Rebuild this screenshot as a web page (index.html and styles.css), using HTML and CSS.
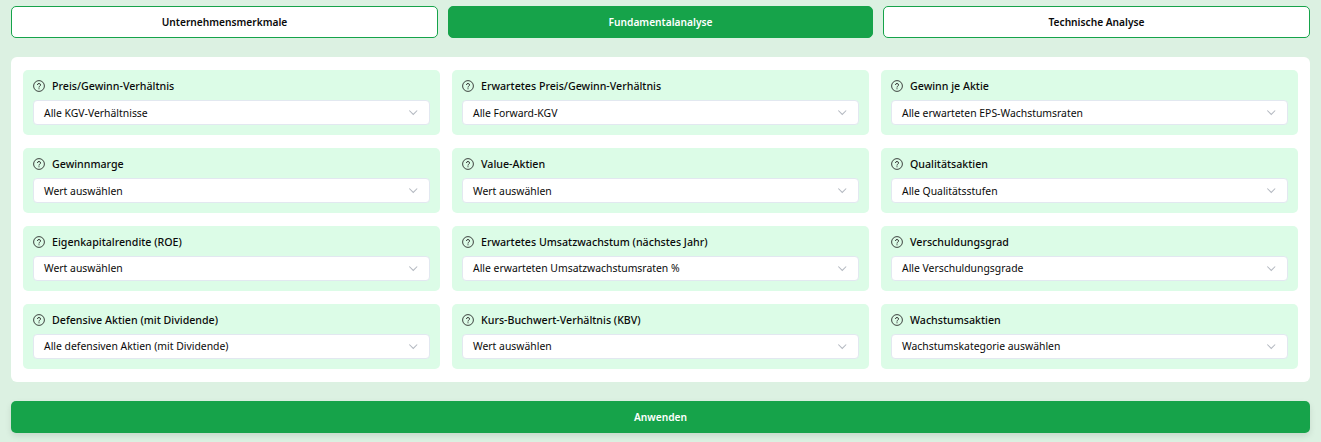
FILE: index.html
```html
<!DOCTYPE html>
<html lang="de">
<head>
  <meta charset="UTF-8">
  <title>Aktien-Screener</title>
  <link rel="stylesheet" href="styles.css">
</head>
<body>
<svg class="sprite" width="0" height="0">
  <symbol id="hilfe" viewBox="0 0 24 24">
    <circle cx="12" cy="12" r="10.8" fill="none" stroke="currentColor" stroke-width="1.7"/>
    <path d="M8.9 9.2a3.1 3.1 0 0 1 6.1.8c0 2-3 2.400-3 4.300" fill="none" stroke="currentColor" stroke-width="1.8" stroke-linecap="round"/>
    <circle cx="12" cy="17.5" r="1.200" fill="currentColor"/>
  </symbol>
  <symbol id="pfeil" viewBox="0 0 12 12">
    <path d="M1.5 4l4.5 4.5L10.500 4" fill="none" stroke="currentColor" stroke-width="1.2"/>
  </symbol>
</svg>

<div class="tabs">
  <button class="tab">Unternehmensmerkmale</button>
  <button class="tab aktiv">Fundamentalanalyse</button>
  <button class="tab">Technische Analyse</button>
</div>

<div class="panel">
  <div class="filter">
    <div class="titel"><svg class="hilfe"><use href="#hilfe"/></svg>Preis/Gewinn-Verhältnis</div>
    <div class="auswahl"><span>Alle KGV-Verhältnisse</span><svg class="pfeil"><use href="#pfeil"/></svg></div>
  </div>
  <div class="filter">
    <div class="titel"><svg class="hilfe"><use href="#hilfe"/></svg>Erwartetes Preis/Gewinn-Verhältnis</div>
    <div class="auswahl"><span>Alle Forward-KGV</span><svg class="pfeil"><use href="#pfeil"/></svg></div>
  </div>
  <div class="filter">
    <div class="titel"><svg class="hilfe"><use href="#hilfe"/></svg>Gewinn je Aktie</div>
    <div class="auswahl"><span>Alle erwarteten EPS-Wachstumsraten</span><svg class="pfeil"><use href="#pfeil"/></svg></div>
  </div>
  <div class="filter">
    <div class="titel"><svg class="hilfe"><use href="#hilfe"/></svg>Gewinnmarge</div>
    <div class="auswahl"><span>Wert auswählen</span><svg class="pfeil"><use href="#pfeil"/></svg></div>
  </div>
  <div class="filter">
    <div class="titel"><svg class="hilfe"><use href="#hilfe"/></svg>Value-Aktien</div>
    <div class="auswahl"><span>Wert auswählen</span><svg class="pfeil"><use href="#pfeil"/></svg></div>
  </div>
  <div class="filter">
    <div class="titel"><svg class="hilfe"><use href="#hilfe"/></svg>Qualitätsaktien</div>
    <div class="auswahl"><span>Alle Qualitätsstufen</span><svg class="pfeil"><use href="#pfeil"/></svg></div>
  </div>
  <div class="filter">
    <div class="titel"><svg class="hilfe"><use href="#hilfe"/></svg>Eigenkapitalrendite (ROE)</div>
    <div class="auswahl"><span>Wert auswählen</span><svg class="pfeil"><use href="#pfeil"/></svg></div>
  </div>
  <div class="filter">
    <div class="titel"><svg class="hilfe"><use href="#hilfe"/></svg>Erwartetes Umsatzwachstum (nächstes Jahr)</div>
    <div class="auswahl"><span>Alle erwarteten Umsatzwachstumsraten %</span><svg class="pfeil"><use href="#pfeil"/></svg></div>
  </div>
  <div class="filter">
    <div class="titel"><svg class="hilfe"><use href="#hilfe"/></svg>Verschuldungsgrad</div>
    <div class="auswahl"><span>Alle Verschuldungsgrade</span><svg class="pfeil"><use href="#pfeil"/></svg></div>
  </div>
  <div class="filter">
    <div class="titel"><svg class="hilfe"><use href="#hilfe"/></svg>Defensive Aktien (mit Dividende)</div>
    <div class="auswahl"><span>Alle defensiven Aktien (mit Dividende)</span><svg class="pfeil"><use href="#pfeil"/></svg></div>
  </div>
  <div class="filter">
    <div class="titel"><svg class="hilfe"><use href="#hilfe"/></svg>Kurs-Buchwert-Verhältnis (KBV)</div>
    <div class="auswahl"><span>Wert auswählen</span><svg class="pfeil"><use href="#pfeil"/></svg></div>
  </div>
  <div class="filter">
    <div class="titel"><svg class="hilfe"><use href="#hilfe"/></svg>Wachstumsaktien</div>
    <div class="auswahl"><span>Wachstumskategorie auswählen</span><svg class="pfeil"><use href="#pfeil"/></svg></div>
  </div>
</div>

<button class="anwenden">Anwenden</button>
</body>
</html>
```

FILE: styles.css
```css
* {
  box-sizing: border-box;
}
html, body {
  height: 100%;
}
body {
  margin: 0;
  padding: 6px 11px 0;
  background: #dcf1e2;
  color: #0a0a0a;
  font-family: "Noto Sans", "Open Sans", sans-serif;
  font-size: 10.4px;
  overflow: hidden;
}
.sprite {
  position: absolute;
}
button {
  font-family: inherit;
}
.tabs {
  display: grid;
  grid-template-columns: 427px 425px 427px;
  gap: 10px;
}
.tab {
  height: 32px;
  padding: 0;
  background: #fff;
  border: 1px solid #16a34a;
  border-radius: 5px;
  color: #0a0a0a;
  font-size: 10.2px;
  font-weight: 600;
}
.tab.aktiv {
  background: #16a34a;
  color: #fff;
}
.panel {
  display: grid;
  grid-template-columns: repeat(3, 1fr);
  gap: 12.9px 12px;
  margin-top: 19px;
  padding: 13px 12px 13.3px;
  background: #fff;
  border-radius: 6px;
}
.filter {
  height: 65px;
  padding: 10px;
  background: #dcfce7;
  border-radius: 5px;
}
.titel {
  display: flex;
  align-items: center;
  height: 12px;
  margin-bottom: 8px;
  font-size: 10.65px;
  font-weight: 500;
}
.hilfe {
  width: 12px;
  height: 12px;
  margin-right: 7px;
  color: #222;
}
.auswahl {
  display: flex;
  align-items: center;
  justify-content: space-between;
  height: 25px;
  padding: 0 11px 0 10px;
  background: #fff;
  border: 1px solid #e2e8f0;
  border-radius: 4px;
}
.auswahl span {
  padding-top: 0.3px;
}
.pfeil {
  width: 10.5px;
  height: 10.5px;
  color: #b4b9c1;
}
.anwenden {
  display: block;
  width: 100%;
  height: 32px;
  margin-top: 19px;
  background: #16a34a;
  border: none;
  border-radius: 5px;
  box-shadow: 0 3px 6px rgba(0, 0, 0, 0.1);
  color: #fff;
  font-size: 10.2px;
  font-weight: 600;
}
```
